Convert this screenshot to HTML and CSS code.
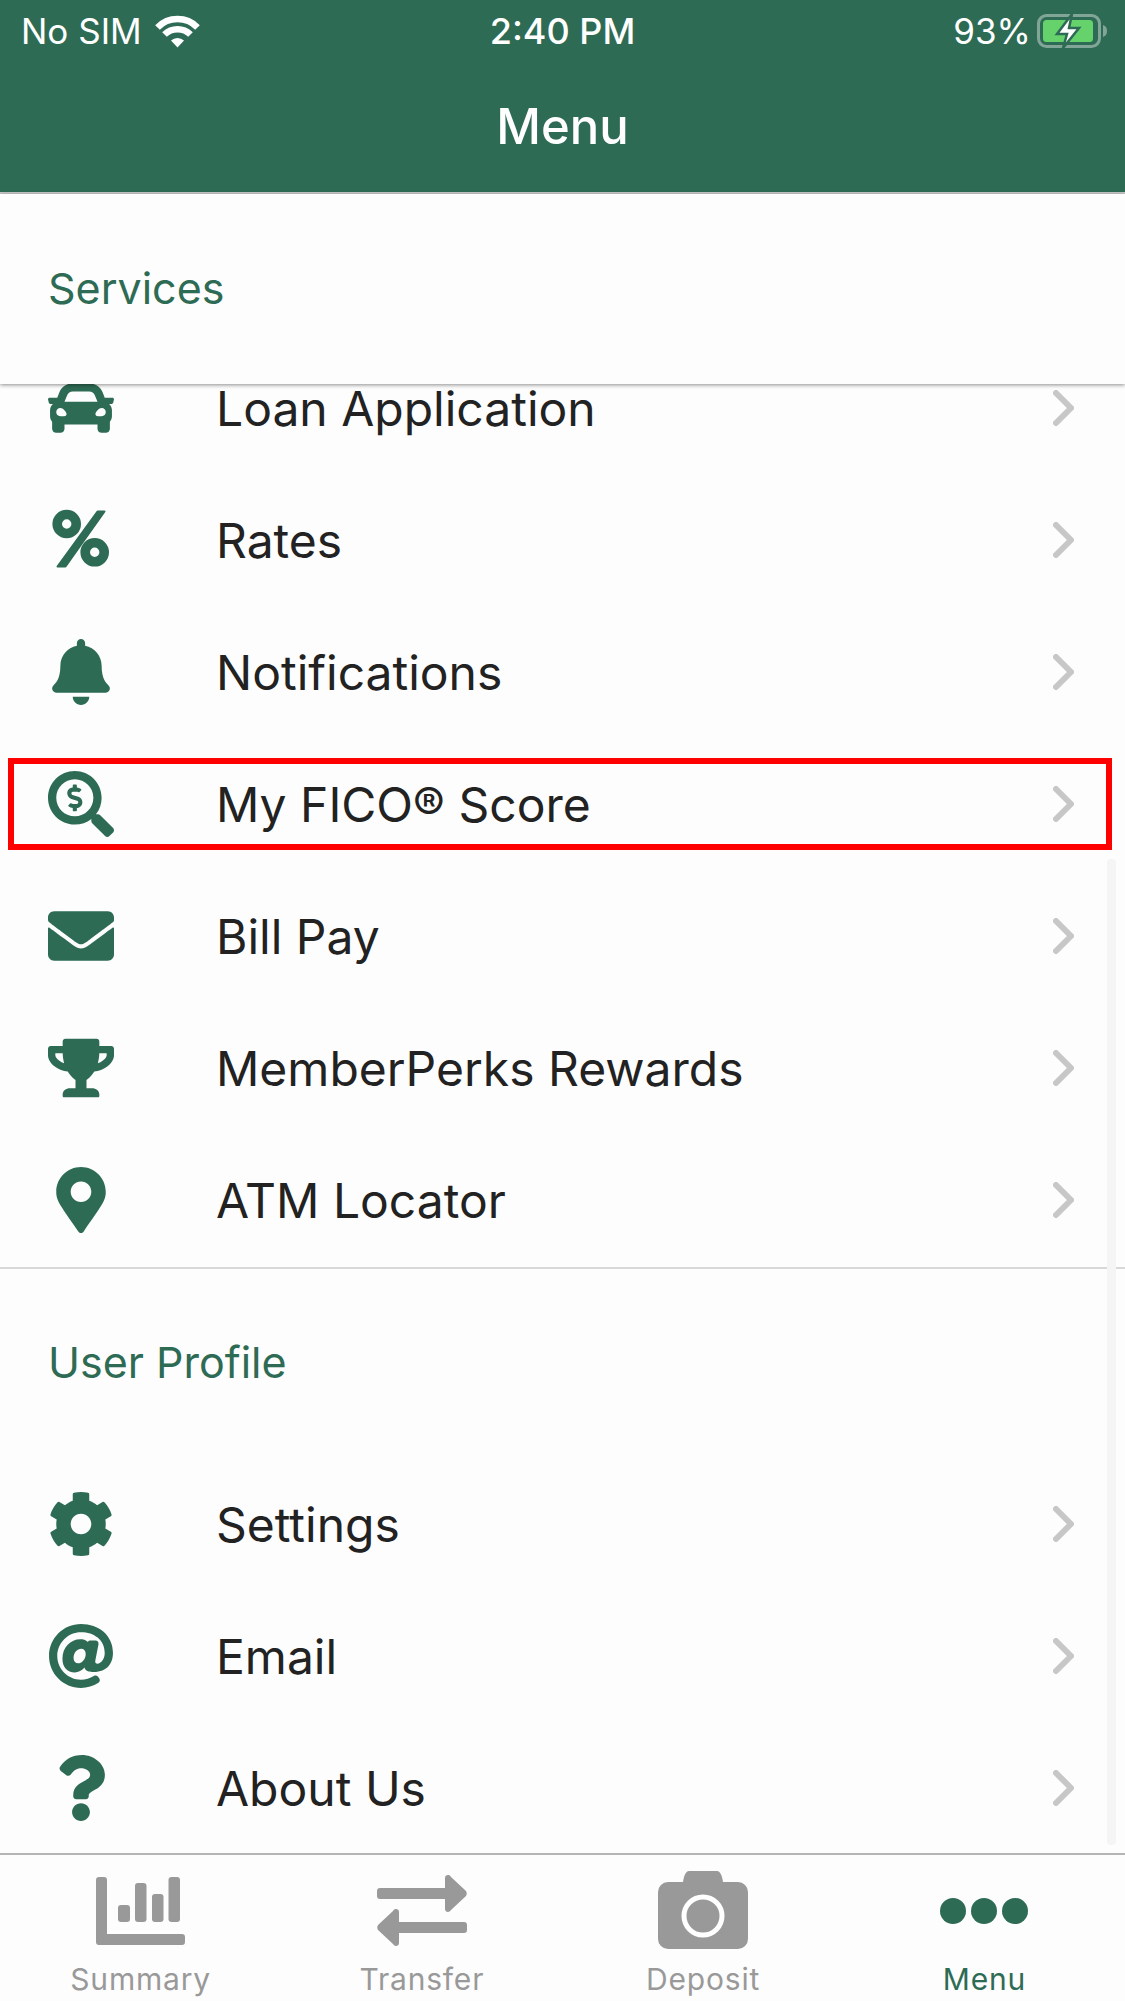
FILE: index.html
```html
<!DOCTYPE html>
<html lang="en">
<head>
    <meta charset="UTF-8">
    <meta name="viewport" content="width=device-width, initial-scale=1.0">
    <title>Menu</title>
    <link rel="stylesheet" href="styles.css">
</head>
<body>
    <svg class="sprite" width="0" height="0">
        <symbol id="chevron" viewBox="0 0 21 36">
            <path d="M3 3l15 15L3 33" fill="none" stroke="currentColor" stroke-width="6" stroke-linecap="round" stroke-linejoin="round"/>
        </symbol>
    </svg>

    <div class="app">
        <header class="top-bar">
            <div class="status-bar">
                <div class="status-left">
                    <span>No SIM</span>
                    <svg class="wifi" viewBox="0 0 47 34">
                        <path d="M3.5 13.5a28 28 0 0 1 40 0" fill="none" stroke="#fff" stroke-width="6.5"/>
                        <path d="M10.5 20.5a18.5 18.5 0 0 1 26 0" fill="none" stroke="#fff" stroke-width="6.5"/>
                        <path d="M17 26.500a9.500 9.500 0 0 1 13 0l-6.500 7z" fill="#fff"/>
                    </svg>
                </div>
                <div class="status-time">2:40 PM</div>
                <div class="status-right">
                    <span>93%</span>
                    <svg class="battery" viewBox="0 0 73 34">
                        <rect x="1.500" y="1.500" width="61" height="31" rx="8" fill="none" stroke="#fff" stroke-opacity="0.4" stroke-width="3"/>
                        <path d="M66 11c3 1 4 3 4 6s-1 5-4 6z" fill="#fff" fill-opacity="0.4"/>
                        <rect x="6" y="6" width="50" height="22" rx="3.500" fill="#66d26c"/>
                        <path d="M35 0L20 20h10l-4 14 16-20H32z" fill="#fff" stroke="#2e6b54" stroke-width="2.500"/>
                    </svg>
                </div>
            </div>
            <h1 class="nav-title">Menu</h1>
        </header>

        <div class="section-head services-head">Services</div>

        <main class="list">
            <a class="row first-row">
                <svg class="row-icon" viewBox="0 0 512 512"><path d="M499.99 176h-59.87l-16.64-41.6C406.38 91.63 365.57 64 319.5 64h-127c-46.06 0-86.88 27.63-103.99 70.4L71.87 176H12.01C4.2 176-1.53 183.34.37 190.91l6 24C7.7 220.25 12.5 224 18.01 224h20.07C24.65 235.73 16 252.78 16 272v48c0 16.12 6.16 30.67 16 41.93V416c0 17.67 14.33 32 32 32h32c17.67 0 32-14.33 32-32v-32h256v32c0 17.67 14.33 32 32 32h32c17.67 0 32-14.33 32-32v-54.07c9.84-11.25 16-25.8 16-41.93v-48c0-19.22-8.65-36.27-22.07-48H494c5.51 0 10.31-3.75 11.64-9.09l6-24c1.89-7.57-3.84-14.91-11.65-14.91zm-352.06-17.83c7.29-18.22 24.94-30.17 44.57-30.17h127c19.63 0 37.28 11.95 44.57 30.17L384 208H128l19.93-49.83zM96 319.800c-19.2 0-32-12.76-32-31.9S76.800 256 96 256s48 28.71 48 47.85-28.8 15.95-48 15.95zm320 0c-19.2 0-48 3.19-48-15.95S396.800 256 416 256s32 12.76 32 31.9-12.8 31.9-32 31.9z"/></svg>
                <span class="row-label">Loan Application</span>
                <svg class="chevron"><use href="#chevron"/></svg>
            </a>
            <a class="row">
                <svg class="row-icon" viewBox="0 0 66 66">
                    <circle cx="18.700" cy="17" r="9.500" fill="none" stroke="currentColor" stroke-width="9.600"/>
                    <circle cx="46.700" cy="45.300" r="9.500" fill="none" stroke="currentColor" stroke-width="9.600"/>
                    <path d="M49.500 4.500h7l-39 55h-8z" stroke="currentColor" stroke-width="2" stroke-linejoin="round"/>
                </svg>
                <span class="row-label">Rates</span>
                <svg class="chevron"><use href="#chevron"/></svg>
            </a>
            <a class="row">
                <svg class="row-icon" viewBox="0 0 448 512"><path d="M224 512c35.32 0 63.97-28.65 63.97-64H160.03c0 35.35 28.65 64 63.97 64zm215.39-149.71c-19.32-20.76-55.47-51.99-55.47-154.29 0-77.7-54.48-139.9-127.94-155.16V32c0-17.67-14.32-32-31.98-32s-31.98 14.33-31.98 32v20.84C118.56 68.1 64.08 130.3 64.08 208c0 102.3-36.15 133.53-55.47 154.29-6 6.45-8.66 14.16-8.61 21.71.11 16.4 12.98 32 32.1 32h383.8c19.12 0 32-15.6 32.1-32 .05-7.55-2.61-15.27-8.61-21.71z"/></svg>
                <span class="row-label">Notifications</span>
                <svg class="chevron"><use href="#chevron"/></svg>
            </a>
            <a class="row">
                <svg class="row-icon" viewBox="0 0 512 512"><path d="M505.04 442.66l-99.71-99.69c-4.5-4.5-10.6-7-17-7h-16.3c27.6-35.3 44-79.69 44-127.99C416.03 93.09 322.92 0 208.02 0S0 93.09 0 207.98s93.11 207.98 208.02 207.98c48.3 0 92.71-16.4 128.01-44v16.3c0 6.4 2.5 12.5 7 17l99.71 99.69c9.4 9.4 24.6 9.4 33.9 0l28.3-28.3c9.4-9.4 9.4-24.59.1-33.99zm-297.02-90.7c-79.54 0-144-64.34-144-143.98 0-79.53 64.35-143.98 144-143.98 79.54 0 144 64.34 144 143.98 0 79.53-64.35 143.98-144 143.98zm27.11-152.54l-45.01-13.5c-5.16-1.55-8.77-6.78-8.77-12.73 0-7.27 5.3-13.19 11.8-13.19h28.11c4.56 0 8.96 1.29 12.82 3.72 3.24 2.03 7.36 1.91 10.13-.73l11.75-11.21c3.53-3.37 3.33-9.21-.57-12.14-9.1-6.83-20.08-10.77-31.37-11.35V112c0-4.42-3.58-8-8-8h-16c-4.42 0-8 3.58-8 8v16.12c-23.63.63-42.68 20.55-42.68 45.07 0 19.97 12.99 37.81 31.58 43.39l45.01 13.5c5.16 1.55 8.77 6.78 8.77 12.73 0 7.27-5.3 13.19-11.8 13.19h-28.1c-4.56 0-8.96-1.29-12.82-3.72-3.24-2.03-7.36-1.91-10.13.73l-11.75 11.21c-3.53 3.37-3.33 9.21.57 12.14 9.1 6.83 20.08 10.77 31.37 11.35V304c0 4.42 3.58 8 8 8h16c4.42 0 8-3.58 8-8v-16.12c23.63-.63 42.68-20.54 42.68-45.07 0-19.97-12.99-37.81-31.59-43.39z"/></svg>
                <span class="row-label">My FICO® Score</span>
                <svg class="chevron"><use href="#chevron"/></svg>
                <span class="highlight"></span>
            </a>
            <a class="row">
                <svg class="row-icon" viewBox="0 0 512 512"><path d="M502.3 190.800c3.9-3.1 9.7-.2 9.7 4.7V400c0 26.5-21.5 48-48 48H48c-26.5 0-48-21.5-48-48V195.600c0-5 5.700-7.800 9.700-4.700 22.400 17.400 52.100 39.500 154.100 113.600 21.100 15.400 56.700 47.800 92.200 47.600 35.700.3 72-32.800 92.300-47.600 102-74.100 131.600-96.300 154-113.700zM256 320c23.200.4 56.600-29.200 73.400-41.400 132.700-96.300 142.800-104.700 173.400-128.700 5.800-4.500 9.200-11.500 9.200-18.900v-19c0-26.500-21.500-48-48-48H48C21.500 64 0 85.500 0 112v19c0 7.400 3.400 14.300 9.200 18.900 30.600 23.900 40.700 32.400 173.400 128.700 16.800 12.200 50.200 41.800 73.400 41.400z"/></svg>
                <span class="row-label">Bill Pay</span>
                <svg class="chevron"><use href="#chevron"/></svg>
            </a>
            <a class="row">
                <svg class="row-icon" viewBox="0 0 576 512"><path d="M552 64H448V24c0-13.3-10.7-24-24-24H152c-13.3 0-24 10.700-24 24v40H24C10.700 64 0 74.700 0 88v56c0 35.700 22.500 72.400 61.900 100.700 31.500 22.700 69.800 37.100 110 41.700C203.300 338.500 240 360 240 360v72h-48c-35.300 0-64 20.700-64 56v12c0 6.600 5.400 12 12 12h296c6.600 0 12-5.400 12-12v-12c0-35.300-28.700-56-64-56h-48v-72s36.700-21.500 68.100-73.600c40.300-4.600 78.600-19 110-41.700 39.300-28.300 61.900-65 61.900-100.700V88c0-13.300-10.700-24-24-24zM99.300 192.800C74.900 175.200 64 155.600 64 144v-16h64.200c1 32.600 5.800 61.200 12.800 86.200-15.100-5.200-29.200-12.400-41.700-21.400zM512 144c0 16.100-17.700 36.100-35.300 48.800-12.500 9-26.700 16.200-41.800 21.400 7-25 11.800-53.600 12.800-86.200H512v16z"/></svg>
                <span class="row-label">MemberPerks Rewards</span>
                <svg class="chevron"><use href="#chevron"/></svg>
            </a>
            <a class="row">
                <svg class="row-icon" viewBox="0 0 384 512"><path d="M172.268 501.67C26.97 291.031 0 262.971 0 192 0 85.961 85.961 0 192 0s192 85.961 192 192c0 70.971-26.97 99.031-172.268 309.67-9.535 13.774-29.93 13.773-39.464 0zM192 272c44.183 0 80-35.817 80-80s-35.817-80-80-80-80 35.817-80 80 35.817 80 80 80z"/></svg>
                <span class="row-label">ATM Locator</span>
                <svg class="chevron"><use href="#chevron"/></svg>
            </a>

            <div class="section-head profile-head">User Profile</div>

            <a class="row">
                <svg class="row-icon" viewBox="0 0 512 512"><path d="M487.4 315.700l-42.600-24.600c4.300-23.200 4.300-47 0-70.200l42.600-24.600c4.900-2.800 7.100-8.600 5.500-14-11.100-35.600-30-67.800-54.700-94.600-3.800-4.100-10-5.100-14.800-2.300L380.800 110c-17.900-15.400-38.500-27.300-60.800-35.100V25.800c0-5.600-3.900-10.500-9.400-11.700-36.700-8.200-74.300-7.800-109.200 0-5.500 1.200-9.400 6.100-9.400 11.700V75c-22.200 7.900-42.800 19.800-60.800 35.100L88.700 85.500c-4.900-2.800-11-1.900-14.800 2.300-24.700 26.700-43.600 58.900-54.700 94.600-1.700 5.400.6 11.200 5.500 14L67.300 221c-4.300 23.200-4.300 47 0 70.200l-42.600 24.600c-4.900 2.800-7.100 8.600-5.500 14 11.100 35.600 30 67.800 54.700 94.600 3.800 4.100 10 5.100 14.800 2.300l42.600-24.600c17.900 15.400 38.500 27.300 60.800 35.100v49.200c0 5.600 3.900 10.500 9.400 11.700 36.700 8.200 74.300 7.800 109.200 0 5.500-1.200 9.400-6.100 9.400-11.700v-49.200c22.200-7.900 42.800-19.800 60.800-35.100l42.600 24.600c4.900 2.800 11 1.900 14.800-2.300 24.700-26.700 43.600-58.900 54.700-94.600 1.500-5.500-.7-11.300-5.600-14.100zM256 336c-44.100 0-80-35.900-80-80s35.900-80 80-80 80 35.900 80 80-35.900 80-80 80z"/></svg>
                <span class="row-label">Settings</span>
                <svg class="chevron"><use href="#chevron"/></svg>
            </a>
            <a class="row">
                <svg class="row-icon" viewBox="0 0 512 512"><path d="M256 8C118.941 8 8 118.919 8 256c0 137.059 110.919 248 248 248 48.154 0 95.342-14.14 135.408-40.223 12.005-7.815 14.625-24.288 5.552-35.372l-10.177-12.433c-7.671-9.371-21.179-11.667-31.373-5.129C325.92 429.757 291.314 440 256 440c-101.458 0-184-82.542-184-184S154.542 72 256 72c100.139 0 184 57.619 184 160 0 38.786-21.093 79.742-58.17 83.693-17.349-.454-16.91-12.857-13.476-30.024l23.433-121.11C394.653 149.75 383.308 136 368.225 136h-44.981a13.518 13.518 0 0 0-13.432 11.993l-.01.092c-14.697-17.901-40.448-21.775-59.971-21.775-74.58 0-137.831 62.234-137.831 151.46 0 65.303 36.785 105.87 96 105.87 26.984 0 57.369-15.637 74.991-38.333 9.522 34.104 40.613 34.103 70.71 34.103C462.609 379.41 504 307.798 504 232 504 95.653 394.023 8 256 8zm-21.68 304.43c-22.249 0-36.07-15.623-36.07-40.771 0-44.993 30.779-72.729 58.63-72.729 22.292 0 35.601 15.241 35.601 40.77 0 45.061-33.875 72.73-58.161 72.73z"/></svg>
                <span class="row-label">Email</span>
                <svg class="chevron"><use href="#chevron"/></svg>
            </a>
            <a class="row">
                <svg class="row-icon" viewBox="0 0 384 512"><path d="M202.021 0C122.202 0 70.503 32.703 29.914 91.026c-7.363 10.58-5.093 25.086 5.178 32.874l43.138 32.709c10.373 7.865 25.132 6.026 33.253-4.148 25.049-31.381 43.63-49.449 82.757-49.449 30.764 0 68.816 19.799 68.816 49.631 0 22.552-18.617 34.134-48.993 51.164-35.423 19.86-82.299 44.576-82.299 106.405V320c0 13.255 10.745 24 24 24h72.471c13.255 0 24-10.745 24-24v-5.773c0-42.86 125.268-44.645 125.268-160.627C377.504 66.256 286.902 0 202.021 0zM192 373.459c-38.196 0-69.271 31.075-69.271 69.271 0 38.195 31.075 69.27 69.271 69.27s69.271-31.075 69.271-69.271-31.075-69.27-69.271-69.27z"/></svg>
                <span class="row-label">About Us</span>
                <svg class="chevron"><use href="#chevron"/></svg>
            </a>

            <div class="scroll-thumb"></div>
        </main>

        <nav class="tab-bar">
            <div class="tab">
                <svg class="tab-icon icon-summary" width="89" height="68" viewBox="0 0 89 68">
                    <path d="M3 0h5a3 3 0 0 1 3 3v54h75a3 3 0 0 1 3 3v5a3 3 0 0 1-3 3H3a3 3 0 0 1-3-3V3a3 3 0 0 1 3-3z"/>
                    <rect x="22" y="28" width="12" height="17" rx="3"/>
                    <rect x="39" y="6" width="11.500" height="39" rx="3"/>
                    <rect x="56" y="17" width="11.500" height="28" rx="3"/>
                    <rect x="72.500" y="0" width="11.500" height="45" rx="3"/>
                </svg>
                <span>Summary</span>
            </div>
            <div class="tab">
                <svg class="tab-icon icon-transfer" width="90" height="71" viewBox="0 0 90 71">
                    <path d="M3 13h65V3c0-3.500 4.500-4 6-1l15 14c1 1.500 1 3.500 0 5L74 35c-1.500 3-6 2.500-6-1V24H3a3 3 0 0 1-3-3v-5a3 3 0 0 1 3-3z"/>
                    <path d="M87 58H22v10c0 3.500-4.500 4-6 1L1 55c-1-1.500-1-3.500 0-5l15-14c1.500-3 6-2.500 6 1v10h65a3 3 0 0 1 3 3v5a3 3 0 0 1-3 3z"/>
                </svg>
                <span>Transfer</span>
            </div>
            <div class="tab">
                <svg class="tab-icon" width="90" height="78" viewBox="0 0 90 78">
                    <path d="M10 11h15c1-7 3-11 6-11h28c3 0 5 4 6 11h15a10 10 0 0 1 10 10v47a10 10 0 0 1-10 10H10A10 10 0 0 1 0 68V21a10 10 0 0 1 10-10z"/>
                    <circle cx="45" cy="45" r="19" fill="none" stroke="#fff" stroke-width="5"/>
                </svg>
                <span>Deposit</span>
            </div>
            <div class="tab tab-active">
                <svg class="tab-icon" width="88" height="26" viewBox="0 0 88 26">
                    <circle cx="13" cy="13" r="13"/>
                    <circle cx="44" cy="13" r="13"/>
                    <circle cx="75" cy="13" r="13"/>
                </svg>
                <span>Menu</span>
            </div>
        </nav>
    </div>
</body>
</html>
```

FILE: styles.css
```css
* {
    box-sizing: border-box;
}
body {
    margin: 0;
    background: #fdfdfd;
    font-family: Inter, "Noto Sans", sans-serif;
    color: #222;
}
.sprite {
    position: absolute;
}
.app {
    width: 1125px;
    height: 2001px;
    display: flex;
    flex-direction: column;
    overflow: hidden;
}
.top-bar {
    height: 194px;
    flex: none;
    background: #2e6b54;
    border-bottom: 2px solid #c9c9c9;
    color: #fff;
}
.status-bar {
    height: 62px;
    padding: 0 21px;
    display: grid;
    grid-template-columns: 1fr auto 1fr;
    align-items: center;
    font-size: 35px;
}
.status-left, .status-right {
    display: flex;
    align-items: center;
}
.status-right {
    justify-content: flex-end;
    gap: 6px;
    margin-right: -6px;
}
.status-left {
    gap: 12px;
}
.status-time {
    font-size: 36px;
    font-weight: 500;
}
.wifi {
    width: 47px;
    height: 34px;
}
.battery {
    width: 73px;
    height: 34px;
}
.nav-title {
    margin: 0;
    height: 130px;
    display: flex;
    align-items: center;
    justify-content: center;
    font-size: 49px;
    font-weight: 500;
    padding-bottom: 1px;
}
.section-head {
    color: #2e6b54;
    font-size: 43px;
    padding-left: 48px;
    display: flex;
    align-items: center;
}
.services-head {
    height: 190px;
    flex: none;
    position: relative;
    z-index: 1;
    padding-bottom: 2px;
    background: #fdfdfd;
    box-shadow: 0 1px 4px rgba(0, 0, 0, 0.45);
}
.profile-head {
    height: 192px;
    border-top: 2px solid #d8d8d8;
    padding-bottom: 4px;
}
.list {
    flex: 1;
    min-height: 0;
    position: relative;
}
.row {
    height: 132px;
    display: flex;
    align-items: center;
    position: relative;
    padding: 0 51px 0 48px;
}
.first-row {
    margin-top: -41px;
}
.row-icon {
    width: 66px;
    height: 66px;
    flex: none;
    fill: #2e6b54;
    color: #2e6b54;
    margin-bottom: 2px;
}
.row-label {
    flex: 1;
    margin-left: 102px;
    font-size: 48px;
    line-height: 46px;
    padding-bottom: 1px;
}
.chevron {
    width: 21px;
    height: 36px;
    flex: none;
    color: #c7c7c7;
    margin-bottom: 2px;
}
.highlight {
    position: absolute;
    top: 19px;
    left: 8px;
    right: 13px;
    height: 92px;
    border: 6px solid #f00;
}
.scroll-thumb {
    position: absolute;
    top: 475px;
    right: 9px;
    width: 9px;
    height: 986px;
    border-radius: 4px;
    background: #f5f5f5;
}
.tab-bar {
    height: 148px;
    flex: none;
    border-top: 2px solid #b5b5b5;
    display: grid;
    grid-template-columns: repeat(4, 1fr);
    background: #fdfdfd;
}
.tab {
    height: 146px;
    display: flex;
    flex-direction: column;
    align-items: center;
    justify-content: flex-end;
    color: #999;
    font-size: 30px;
    padding-bottom: 4px;
    letter-spacing: 0.8px;
}
.tab-icon {
    fill: #999;
    margin-bottom: 12px;
}
.icon-summary {
    margin-bottom: 16px;
}
.icon-transfer {
    margin-bottom: 15px;
}
.tab-active {
    color: #2e6b54;
}
.tab-active .tab-icon {
    fill: #2e6b54;
    margin-bottom: 37px;
}
```
